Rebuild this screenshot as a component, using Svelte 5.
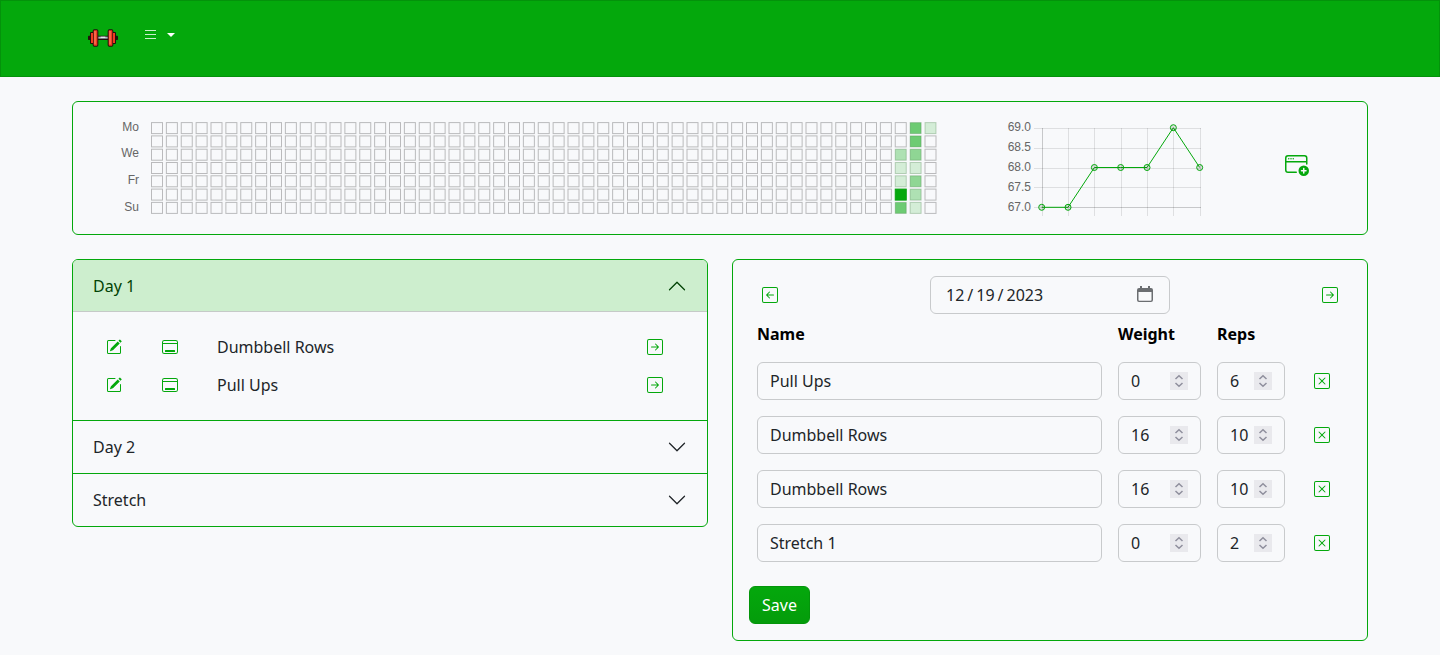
<script>
  const icons = {
    pencil: [
      'M15.502 1.94a.5.5 0 0 1 0 .706L14.459 3.69l-2-2L13.502.646a.5.5 0 0 1 .707 0l1.293 1.293zm-1.75 2.456-2-2L4.939 9.21a.5.5 0 0 0-.121.196l-.805 2.414a.25.25 0 0 0 .316.316l2.414-.805a.5.5 0 0 0 .196-.12l6.813-6.814z',
      'M1 13.5A1.5 1.5 0 0 0 2.5 15h11a1.5 1.5 0 0 0 1.5-1.5v-6a.5.5 0 0 0-1 0v6a.5.5 0 0 1-.5.5h-11a.5.5 0 0 1-.5-.5v-11a.5.5 0 0 1 .5-.5H9a.5.5 0 0 0 0-1H2.5A1.5 1.5 0 0 0 1 2.5z'
    ],
    desktop: [
      'M3.5 11a.5.5 0 0 0-.5.5v1a.5.5 0 0 0 .5.5h9a.5.5 0 0 0 .5-.5v-1a.5.5 0 0 0-.5-.5z',
      'M2.375 1A2.366 2.366 0 0 0 0 3.357v9.286A2.366 2.366 0 0 0 2.375 15h11.25A2.366 2.366 0 0 0 16 12.643V3.357A2.366 2.366 0 0 0 13.625 1zM1 3.357C1 2.612 1.611 2 2.375 2h11.25C14.389 2 15 2.612 15 3.357V4H1zM1 5h14v7.643c0 .745-.611 1.357-1.375 1.357H2.375A1.366 1.366 0 0 1 1 12.643z'
    ],
    right: [
      'M15 2a1 1 0 0 0-1-1H2a1 1 0 0 0-1 1v12a1 1 0 0 0 1 1h12a1 1 0 0 0 1-1zM0 2a2 2 0 0 1 2-2h12a2 2 0 0 1 2 2v12a2 2 0 0 1-2 2H2a2 2 0 0 1-2-2zm4.5 5.5a.5.5 0 0 0 0 1h5.793l-2.147 2.146a.5.5 0 0 0 .708.708l3-3a.5.5 0 0 0 0-.708l-3-3a.5.5 0 1 0-.708.708L10.293 7.5z'
    ],
    left: [
      'M15 2a1 1 0 0 0-1-1H2a1 1 0 0 0-1 1v12a1 1 0 0 0 1 1h12a1 1 0 0 0 1-1zM0 2a2 2 0 0 1 2-2h12a2 2 0 0 1 2 2v12a2 2 0 0 1-2 2H2a2 2 0 0 1-2-2zm11.5 5.5a.5.5 0 0 1 0 1H5.707l2.147 2.146a.5.5 0 0 1-.708.708l-3-3a.5.5 0 0 1 0-.708l3-3a.5.5 0 1 1 .708.708L5.707 7.5z'
    ],
    close: [
      'M14 1a1 1 0 0 1 1 1v12a1 1 0 0 1-1 1H2a1 1 0 0 1-1-1V2a1 1 0 0 1 1-1zM2 0a2 2 0 0 0-2 2v12a2 2 0 0 0 2 2h12a2 2 0 0 0 2-2V2a2 2 0 0 0-2-2z',
      'M4.646 4.646a.5.5 0 0 1 .708 0L8 7.293l2.646-2.647a.5.5 0 0 1 .708.708L8.707 8l2.647 2.646a.5.5 0 0 1-.708.708L8 8.707l-2.646 2.647a.5.5 0 0 1-.708-.708L7.293 8 4.646 5.354a.5.5 0 0 1 0-.708'
    ],
    windowPlus: [
      'M2.5 5a.5.5 0 1 0 0-1 .5.5 0 0 0 0 1M4 5a.5.5 0 1 0 0-1 .5.5 0 0 0 0 1m2-.5a.5.5 0 1 1-1 0 .5.5 0 0 1 1 0',
      'M0 4a2 2 0 0 1 2-2h11a2 2 0 0 1 2 2v4a.5.5 0 0 1-1 0V7H1v5a1 1 0 0 0 1 1h5.5a.5.5 0 0 1 0 1H2a2 2 0 0 1-2-2zm1 2h13V4a1 1 0 0 0-1-1H2a1 1 0 0 0-1 1z',
      'M16 12.5a3.5 3.5 0 1 1-7 0 3.5 3.5 0 0 1 7 0m-3.5-2a.5.5 0 0 0-.5.5v1h-1a.5.5 0 0 0 0 1h1v1a.5.5 0 0 0 1 0v-1h1a.5.5 0 0 0 0-1h-1v-1a.5.5 0 0 0-.5-.5'
    ],
    chevron: [
      'M1.646 4.646a.5.5 0 0 1 .708 0L8 10.293l5.646-5.647a.5.5 0 0 1 .708.708l-6 6a.5.5 0 0 1-.708 0l-6-6a.5.5 0 0 1 0-.708z'
    ]
  };

  // Activity level by "week-weekday"; days that are absent had no training.
  const activity = {
    '50-2': 0.3, '50-3': 0.15, '50-4': 0.15, '50-5': 1, '50-6': 0.57,
    '51-0': 0.57, '51-1': 0.57, '51-2': 0.43, '51-3': 0.15, '51-4': 0.43, '51-5': 0.3, '51-6': 0.15,
    '52-0': 0.15
  };
  const cells = Array.from({ length: 53 * 7 }, (_, i) => {
    const week = Math.floor(i / 7);
    const day = i % 7;
    return { x: 30.5 + week * 14.875, y: 4.6 + day * 13.3, level: activity[`${week}-${day}`] ?? 0 };
  });
  const weekdays = [['Mo', 13], ['We', 39], ['Fr', 66], ['Su', 93]];

  const weights = [67, 67, 68, 68, 68, 69, 68];
  const points = weights.map((w, i) => ({ x: 34.7 + i * 26.33, y: 9.7 + (69 - w) * 39.8 }));
  const ticksY = [[69, 10.5], [68.5, 30.5], [68, 50.5], [67.5, 69.5], [67, 89.5]];
  const ticksX = [35.5, 61.5, 87.5, 114.5, 140.5, 166.5, 193.5];

  let days = $state([
    { name: 'Day 1', open: true, exercises: ['Dumbbell Rows', 'Pull Ups'] },
    { name: 'Day 2', open: false, exercises: [] },
    { name: 'Stretch', open: false, exercises: [] }
  ]);

  let date = $state('2023-12-19');
  let sets = $state([
    { name: 'Pull Ups', weight: 0, reps: 6 },
    { name: 'Dumbbell Rows', weight: 16, reps: 10 },
    { name: 'Dumbbell Rows', weight: 16, reps: 10 },
    { name: 'Stretch 1', weight: 0, reps: 2 }
  ]);

  function shiftDate(step) {
    const d = new Date(date + 'T00:00:00Z');
    d.setUTCDate(d.getUTCDate() + step);
    date = d.toISOString().slice(0, 10);
  }
</script>

{#snippet icon(name, size = 16)}
  <svg width={size} height={size} viewBox="0 0 16 16" fill="currentColor" aria-hidden="true">
    {#each icons[name] as d}<path {d} fill-rule="evenodd" />{/each}
  </svg>
{/snippet}

<header class="topbar">
  <nav class="container nav">
    <a class="brand" href="/" aria-label="Home">
      <svg width="30" height="18" viewBox="0 0 90 54" aria-hidden="true">
        <g fill="#24100c">
          <rect x="0" y="20" width="90" height="13" rx="2" />
          <rect x="6" y="9" width="14" height="36" rx="3" />
          <rect x="70" y="9" width="14" height="36" rx="3" />
          <rect x="14" y="1" width="17" height="52" rx="5" />
          <rect x="59" y="1" width="17" height="52" rx="5" />
        </g>
        <rect x="31" y="23" width="28" height="6" fill="#a9b4bf" />
        <rect x="38" y="23" width="14" height="4" fill="#e3e8ee" />
        <g fill="#f03a22">
          <rect x="9" y="12" width="6" height="30" />
          <rect x="75" y="12" width="6" height="30" />
          <rect x="17" y="4" width="11" height="46" rx="2" />
          <rect x="62" y="4" width="11" height="46" rx="2" />
        </g>
        <g fill="#ff7a5a">
          <rect x="19" y="6" width="4" height="40" />
          <rect x="64" y="6" width="4" height="40" />
        </g>
      </svg>
    </a>
    <button class="menu" type="button" aria-label="Menu">
      <svg width="12" height="12" viewBox="0 0 12 12" aria-hidden="true">
        <path d="M1 1.500h11M1 5.500h11M1 9.500h11" stroke="#fff" stroke-opacity=".8" />
      </svg>
      <svg width="8" height="4" viewBox="0 0 8 4" aria-hidden="true"><path d="M0 0h8L4 4z" fill="#fff" /></svg>
    </button>
  </nav>
</header>

<main class="container">
  <section class="card overview">
    <svg class="chart" viewBox="0 0 816 100" role="img" aria-label="Training days">
      {#each weekdays as [label, y]}
        <text x="18" {y} text-anchor="end">{label}</text>
      {/each}
      {#each cells as c}
        <rect class="cell" class:filled={c.level > 0} class:full={c.level === 1} x={c.x} y={c.y} width="11" height="11" fill-opacity={c.level} />
      {/each}
    </svg>
    <svg class="chart" viewBox="0 0 196 100" role="img" aria-label="Body weight">
      {#each ticksY as [value, y]}
        <text x="24" y={y > 60 ? y + 3.5 : y + 2.5} text-anchor="end">{value.toFixed(1)}</text>
        <path class="grid" d="M27 {y}H194" />
      {/each}
      {#each ticksX as x}
        <path class="grid" d="M{x} 10V98" />
      {/each}
      <path class="grid" d="M35.5 10V89.5H194" />
      <polyline class="line" points={points.map((p) => `${p.x},${p.y}`).join(' ')} />
      {#each points as p}
        <circle class="dot" cx={p.x} cy={p.y} r="3" />
      {/each}
    </svg>
    <button class="icon-btn add" type="button" aria-label="Add widget">{@render icon('windowPlus', 24)}</button>
  </section>

  <div class="columns">
    <section class="card accordion">
      {#each days as day}
        <div class="item">
          <button class="toggle" class:open={day.open} type="button" aria-expanded={day.open} onclick={() => (day.open = !day.open)}>
            <span>{day.name}</span>
            {@render icon('chevron', 20)}
          </button>
          {#if day.open}
            <ul class="exercises">
              {#each day.exercises as exercise}
                <li>
                  <button class="icon-btn" type="button" aria-label="Edit">{@render icon('pencil')}</button>
                  <button class="icon-btn" type="button" aria-label="Details">{@render icon('desktop')}</button>
                  <span>{exercise}</span>
                  <button class="icon-btn" type="button" aria-label="Add to workout">{@render icon('right')}</button>
                </li>
              {/each}
            </ul>
          {/if}
        </div>
      {/each}
    </section>

    <form class="card workout" onsubmit={(e) => e.preventDefault()}>
      <div class="dates">
        <button class="icon-btn" type="button" aria-label="Previous day" onclick={() => shiftDate(-1)}>{@render icon('left')}</button>
        <input class="field date" type="date" aria-label="Date" bind:value={date} />
        <button class="icon-btn" type="button" aria-label="Next day" onclick={() => shiftDate(1)}>{@render icon('right')}</button>
      </div>
      <table>
        <colgroup><col /><col class="c-weight" /><col class="c-reps" /><col class="c-remove" /></colgroup>
        <thead>
          <tr><th>Name</th><th>Weight</th><th>Reps</th><th></th></tr>
        </thead>
        <tbody>
          {#each sets as set, i}
            <tr>
              <td><input class="field" type="text" aria-label="Name" bind:value={set.name} /></td>
              <td><input class="field number" type="number" aria-label="Weight" bind:value={set.weight} /></td>
              <td><input class="field number" type="number" aria-label="Reps" bind:value={set.reps} /></td>
              <td><button class="icon-btn" type="button" aria-label="Remove" onclick={() => sets.splice(i, 1)}>{@render icon('close')}</button></td>
            </tr>
          {/each}
        </tbody>
      </table>
      <button class="save" type="submit">Save</button>
    </form>
  </div>
</main>

<style>
  :global(body) {
    margin: 0;
    background: #f8f9fb;
    color: #212529;
    font: 16px/24px "Noto Sans", sans-serif;
  }
  :global(*) { box-sizing: border-box; }
  button, input { font: inherit; color: inherit; }
  button { cursor: pointer; }
  svg { display: block; }

  .container { max-width: 1320px; margin: 0 auto; padding: 0 12px; }
  .topbar { background: #04a80c; border: 1px solid #04920b; }
  .nav { display: flex; align-items: flex-start; gap: 16px; height: 75px; padding: 14px 28px; }
  .brand { padding: 14px 0; }
  .menu {
    display: flex;
    align-items: center;
    gap: 11px;
    padding: 14px 10px;
    border: 0;
    background: none;
  }

  .card { border: 1px solid #04a80c; border-radius: 6px; }
  .overview {
    display: grid;
    grid-template-columns: minmax(0, 816fr) minmax(0, 196fr) 46px;
    gap: 70px;
    align-items: center;
    margin: 24px 0;
    padding: 16px 48px;
  }
  .chart { width: 100%; overflow: visible; }
  .chart text { font: 12px "Liberation Sans", Arial, sans-serif; fill: #666; }
  .cell { fill: #04a80c; stroke: rgba(0, 0, 0, 0.25); }
  .cell.filled { stroke: rgba(60, 120, 60, 0.3); }
  .cell.full { stroke: #04a00c; }
  .grid { stroke: rgba(0, 0, 0, 0.1); fill: none; }
  .line { stroke: #04a80c; fill: none; }
  .dot { stroke: #04a80c; fill: rgba(0, 0, 0, 0.1); }

  .icon-btn {
    display: flex;
    align-items: center;
    justify-content: center;
    min-width: 42px;
    height: 38px;
    padding: 0;
    border: 0;
    background: none;
    color: #04a80c;
  }
  .add { padding: 0 0 8px 2px; }

  .columns {
    display: grid;
    grid-template-columns: minmax(0, 1fr) minmax(0, 1fr);
    gap: 24px;
    align-items: start;
    padding-bottom: 14px;
  }
  .accordion { overflow: hidden; }
  .item + .item { border-top: 1px solid #04a80c; }
  .toggle {
    display: flex;
    align-items: center;
    justify-content: space-between;
    width: 100%;
    padding: 14px 20px;
    border: 0;
    background: none;
    text-align: left;
  }
  .toggle.open { background: #cdeece; color: #024305; box-shadow: inset 0 -1px 0 #c6cac8; }
  .toggle.open :global(svg) { transform: rotate(180deg); }
  .exercises { margin: 0; padding: 16px 20px; list-style: none; }
  .exercises li { display: flex; align-items: center; gap: 14px; padding-right: 11px; }
  .exercises span { flex: 1; padding-left: 12px; }

  .workout { padding: 16px; }
  .dates { display: flex; justify-content: space-between; align-items: center; }
  .field {
    display: block;
    width: 100%;
    height: 38px;
    padding: 6px 12px;
    border: 1px solid #c8cacc;
    border-radius: 6px;
    background: transparent;
  }
  .date {
    width: 240px;
    padding: 6px 14px;
    background: url("data:image/svg+xml,%3Csvg xmlns='http://www.w3.org/2000/svg' width='16' height='18'%3E%3Cpath d='M3 0h2v2h6V0h2v2h1a2 2 0 0 1 2 2v10a2 2 0 0 1-2 2H2a2 2 0 0 1-2-2V4a2 2 0 0 1 2-2h1zM1.500 6v8q0 .7.7.7h11.600q.7 0 .7-.7V6z' fill='%236b6e71' fill-rule='evenodd'/%3E%3C/svg%3E") no-repeat right 16px center;
  }
  .date::-webkit-calendar-picker-indicator { opacity: 0; }
  .date::-webkit-datetime-edit-text { padding: 0 2px; }
  .number {
    appearance: textfield;
    padding-right: 32px;
    background: url("data:image/svg+xml,%3Csvg xmlns='http://www.w3.org/2000/svg' width='18' height='18'%3E%3Cpath d='M0 0h18v18H0z' fill='%23e9e9ed'/%3E%3Cpath d='M5.500 7 9 3.700 12.500 7M5.500 11 9 14.300 12.500 11' fill='none' stroke='%238f8f9d' stroke-width='1.500'/%3E%3C/svg%3E") no-repeat right 12px center;
  }
  .number::-webkit-inner-spin-button { appearance: none; margin: 0; }

  table { width: 100%; border-collapse: collapse; table-layout: fixed; }
  th, td { padding: 8px; text-align: left; }
  th { color: #000; font-weight: 700; }
  .c-weight { width: 99px; }
  .c-reps { width: 84px; }
  .c-remove { width: 58px; }
  .save {
    display: block;
    margin-top: 16px;
    padding: 6px 12px;
    border: 1px solid #04950b;
    border-radius: 6px;
    background: linear-gradient(#04a80c, #049c0b);
    color: #fff;
  }
</style>
